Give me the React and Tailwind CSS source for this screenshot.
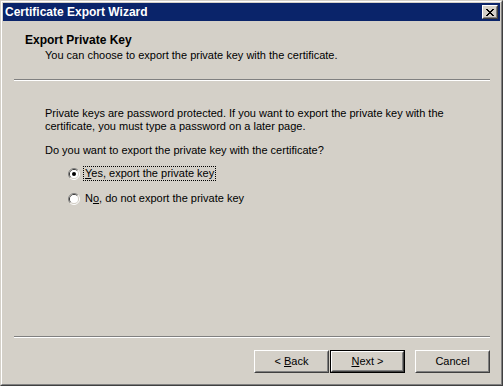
import React from "react";

function Radio({ checked }) {
  return (
    <svg width="12" height="12" viewBox="0 0 12 12" className="shrink-0">
      <path d="M2.11 9.89 A5.5 5.5 0 0 1 9.89 2.11" fill="none" stroke="#808080" strokeWidth="1" />
      <path d="M9.89 2.11 A5.5 5.5 0 0 1 2.11 9.89" fill="none" stroke="#ffffff" strokeWidth="1" />
      <path d="M2.82 9.18 A4.5 4.5 0 0 1 9.18 2.82" fill="none" stroke="#404040" strokeWidth="1" />
      <path d="M9.18 2.82 A4.5 4.5 0 0 1 2.82 9.18" fill="none" stroke="#d4d0c8" strokeWidth="1" />
      <circle cx="6" cy="6" r="4" fill="#ffffff" />
      {checked && <circle cx="6" cy="6" r="2" fill="#000000" />}
    </svg>
  );
}

function Btn({ children, isDefault }) {
  const inner = (
    <div className="w-full h-full border border-t-white border-l-white border-r-[#404040] border-b-[#404040]">
      <div className="w-full h-full border border-t-[#d4d0c8] border-l-[#d4d0c8] border-r-[#808080] border-b-[#808080] flex items-center justify-center">
        {children}
      </div>
    </div>
  );
  if (isDefault) {
    return <div className="w-[75px] h-[23px] border border-black">{inner}</div>;
  }
  return <div className="w-[75px] h-[23px]">{inner}</div>;
}

export default function App() {
  return (
    <div
      className="w-[503px] h-[386px] bg-[#d4d0c8] text-black text-[11px] leading-[13px]"
      style={{ fontFamily: '"Liberation Sans", Arial, sans-serif' }}
    >
      <div className="w-full h-full border border-t-[#d4d0c8] border-l-[#d4d0c8] border-r-[#404040] border-b-[#404040]">
        <div className="w-full h-full border border-t-white border-l-white border-r-[#808080] border-b-[#808080] p-px flex flex-col">
          {/* Title bar */}
          <div className="h-[18px] bg-[#0a246a] flex items-center justify-between pl-[2px] pr-[2px] shrink-0">
            <span className="text-white font-bold text-[12px] leading-[14px]">Certificate Export Wizard</span>
            <div className="w-[16px] h-[14px] border border-t-white border-l-white border-r-[#404040] border-b-[#404040] bg-[#d4d0c8]">
              <div className="w-full h-full border border-t-[#d4d0c8] border-l-[#d4d0c8] border-r-[#808080] border-b-[#808080] flex items-center justify-center">
                <svg width="8" height="7" viewBox="0 0 8 7">
                  <path d="M0 0h2v1h1v1h2v-1h1v-1h2v1h-1v1h-1v1h-1v1h1v1h1v1h1v1h-2v-1h-1v-1h-2v1h-1v1h-2v-1h1v-1h1v-1h1v-1h-1v-1h-1v-1h-1z" fill="#000" />
                </svg>
              </div>
            </div>
          </div>

          {/* Content */}
          <div className="flex-1 flex flex-col">
            <div className="pt-[13px] pl-[22px]">
              <div className="font-bold text-[12px] leading-[13px]">Export Private Key</div>
              <div className="mt-[2px] pl-[20px]">You can choose to export the private key with the certificate.</div>
            </div>
            <div className="mt-[17px] ml-[11px] mr-[10px] h-[2px] border-t border-t-[#808080] border-b border-b-white" />

            <div className="pl-[42px] pr-[10px]">
              <div className="mt-[26px]">
                Private keys are password protected. If you want to export the private key with the
                <br />
                certificate, you must type a password on a later page.
              </div>
              <div className="mt-[11px]">Do you want to export the private key with the certificate?</div>
              <div className="mt-[9px] ml-[23px] flex items-center h-[15px]">
                <Radio checked />
                <span className="ml-[3px] border border-dotted border-black px-px h-[15px] flex items-center">
                  <span><u>Y</u>es, export the private key</span>
                </span>
              </div>
              <div className="mt-[10px] ml-[23px] flex items-center h-[15px]">
                <Radio />
                <span className="ml-[4px] px-px">
                  N<u>o</u>, do not export the private key
                </span>
              </div>
            </div>

            <div className="mt-auto ml-[11px] mr-[10px] h-[2px] border-t border-t-[#808080] border-b border-b-white" />
            <div className="mt-[12px] mb-[10px] pr-[10px] flex justify-end items-center">
              <Btn>
                <span>&lt; <u>B</u>ack</span>
              </Btn>
              <div className="w-px" />
              <Btn isDefault>
                <span><u>N</u>ext &gt;</span>
              </Btn>
              <div className="w-[10px]" />
              <Btn>
                <span>Cancel</span>
              </Btn>
            </div>
          </div>
        </div>
      </div>
    </div>
  );
}
